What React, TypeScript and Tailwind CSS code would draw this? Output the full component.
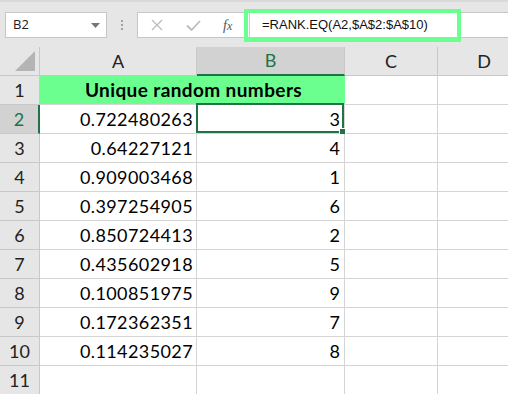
import React from "react";

const rows: [string, string][] = [
  ["0.722480263", "3"],
  ["0.64227121", "4"],
  ["0.909003468", "1"],
  ["0.397254905", "6"],
  ["0.850724413", "2"],
  ["0.435602918", "5"],
  ["0.100851975", "9"],
  ["0.172362351", "7"],
  ["0.114235027", "8"],
];

const cellFont = { fontFamily: "Lato, 'Open Sans', sans-serif" };

export default function App() {
  return (
    <div className="w-[508px] h-[394px] overflow-hidden bg-white relative" style={cellFont}>
      {/* Toolbar */}
      <div className="h-[47px] bg-[#e6e6e6] border-t-2 border-[#d9d9d9] flex items-start pt-[10px] pl-[5px]">
        <div className="w-[102px] h-[26px] bg-white border border-[#c6c6c6] flex items-center justify-between pl-[7px] pr-[6px]">
          <span className="text-[13px] text-[#222]" style={{ fontFamily: "'Open Sans', sans-serif" }}>B2</span>
          <svg width="9" height="5" viewBox="0 0 9 5"><path d="M0 0 L9 0 L4.5 5 Z" fill="#777" /></svg>
        </div>
        <div className="w-[30px] h-[26px] flex flex-col items-center justify-center gap-[2px]">
          <span className="w-[2px] h-[2px] bg-[#a0a0a0]" />
          <span className="w-[2px] h-[2px] bg-[#a0a0a0]" />
          <span className="w-[2px] h-[2px] bg-[#a0a0a0]" />
        </div>
        <div className="flex-1 h-[26px] bg-white border border-[#c6c6c6] border-r-0 flex items-center">
          <div className="w-[112px] h-full flex items-center border-r border-[#d0d0d0]">
            <svg className="ml-[13px]" width="12" height="12" viewBox="0 0 12 12">
              <path d="M1 1 L11 11 M11 1 L1 11" stroke="#bdbdbd" strokeWidth="1.4" fill="none" />
            </svg>
            <svg className="ml-[23px]" width="15" height="11" viewBox="0 0 15 11">
              <path d="M1 5.5 L5.5 10 L14 1" stroke="#bdbdbd" strokeWidth="1.8" fill="none" />
            </svg>
            <span className="ml-[22px] text-[14px] italic text-[#555]" style={{ fontFamily: "'Liberation Serif', serif" }}>
              f<span className="text-[12px]">x</span>
            </span>
          </div>
          <span className="ml-[12px] text-[13px] text-[#111]" style={{ fontFamily: "'Liberation Sans', sans-serif" }}>
            =RANK.EQ(A2,$A$2:$A$10)
          </span>
        </div>
      </div>
      {/* green highlight overlay */}
      <div className="absolute left-[244px] top-[9px] w-[217px] h-[33px] border-4 border-[#6bff8f]" />

      {/* Header row */}
      <div className="flex h-[29px]">
        <div className="w-[40px] shrink-0 bg-[#e6e6e6] border-r border-b border-[#c8c8c8] relative flex items-end justify-end pr-[4px] pb-[4px]">
          <svg width="20" height="20" viewBox="0 0 20 20"><path d="M20 0 L20 20 L0 20 Z" fill="#b4b4b4" /></svg>
        </div>
        <div className="w-[157px] shrink-0 bg-[#e6e6e6] border-r border-b border-[#c8c8c8] flex items-center justify-center text-[18px] text-[#222]">A</div>
        <div className="w-[148px] shrink-0 bg-[#d2d2d2] border-r border-[#c8c8c8] border-b-2 border-b-[#217346] flex items-center justify-center text-[18px] text-[#217346]">B</div>
        <div className="w-[93px] shrink-0 bg-[#e6e6e6] border-r border-b border-[#c8c8c8] flex items-center justify-center text-[18px] text-[#222]">C</div>
        <div className="w-[93px] shrink-0 bg-[#e6e6e6] border-r border-b border-[#c8c8c8] flex items-center justify-center text-[18px] text-[#222]">D</div>
      </div>

      {/* Row 1 */}
      <div className="flex h-[29px]">
        <div className="w-[40px] shrink-0 bg-[#e6e6e6] border-r border-b border-[#c8c8c8] flex items-center justify-center text-[18px] text-[#222]">1</div>
        <div className="w-[305px] shrink-0 bg-[#6bff8f] border-b border-[#d4d4d4] flex items-center justify-center text-[19px] font-bold text-black tracking-[0.4px] pl-[2px]">
          Unique random numbers
        </div>
        <div className="w-[93px] shrink-0 border-r border-b border-[#d4d4d4]" />
        <div className="w-[93px] shrink-0 border-r border-b border-[#d4d4d4]" />
      </div>

      {rows.map(([a, b], i) => {
        const sel = i === 0;
        return (
          <div key={i} className="flex h-[29px]">
            <div
              className={
                sel
                  ? "w-[40px] shrink-0 bg-[#d2d2d2] border-r-2 border-r-[#217346] border-b border-b-[#c8c8c8] flex items-center justify-center text-[18px] text-[#217346]"
                  : "w-[40px] shrink-0 bg-[#e6e6e6] border-r border-b border-[#c8c8c8] flex items-center justify-center text-[18px] text-[#222]"
              }
            >
              {i + 2}
            </div>
            <div className="w-[157px] shrink-0 border-r border-b border-[#d4d4d4] flex items-center justify-end pr-[3px] text-[18px] text-black tracking-[0.4px]">
              {a}
            </div>
            <div className="w-[148px] shrink-0 border-r border-b border-[#d4d4d4] flex items-center justify-end pr-[4px] text-[18px] text-black relative">
              {b}
              {sel && (
                <>
                  <div className="absolute -top-[2px] -left-[1px] right-0 bottom-0 border-2 border-[#217346]" />
                  <div className="absolute -right-[2px] -bottom-[2px] w-[7px] h-[7px] bg-[#217346] border border-white" />
                </>
              )}
            </div>
            <div className="w-[93px] shrink-0 border-r border-b border-[#d4d4d4]" />
            <div className="w-[93px] shrink-0 border-r border-b border-[#d4d4d4]" />
          </div>
        );
      })}

      {/* Row 11 */}
      <div className="flex h-[29px]">
        <div className="w-[40px] shrink-0 bg-[#e6e6e6] border-r border-b border-[#c8c8c8] flex items-center justify-center text-[18px] text-[#222]">11</div>
        <div className="w-[157px] shrink-0 border-r border-b border-[#d4d4d4]" />
        <div className="w-[148px] shrink-0 border-r border-b border-[#d4d4d4]" />
        <div className="w-[93px] shrink-0 border-r border-b border-[#d4d4d4]" />
        <div className="w-[93px] shrink-0 border-r border-b border-[#d4d4d4]" />
      </div>
    </div>
  );
}
